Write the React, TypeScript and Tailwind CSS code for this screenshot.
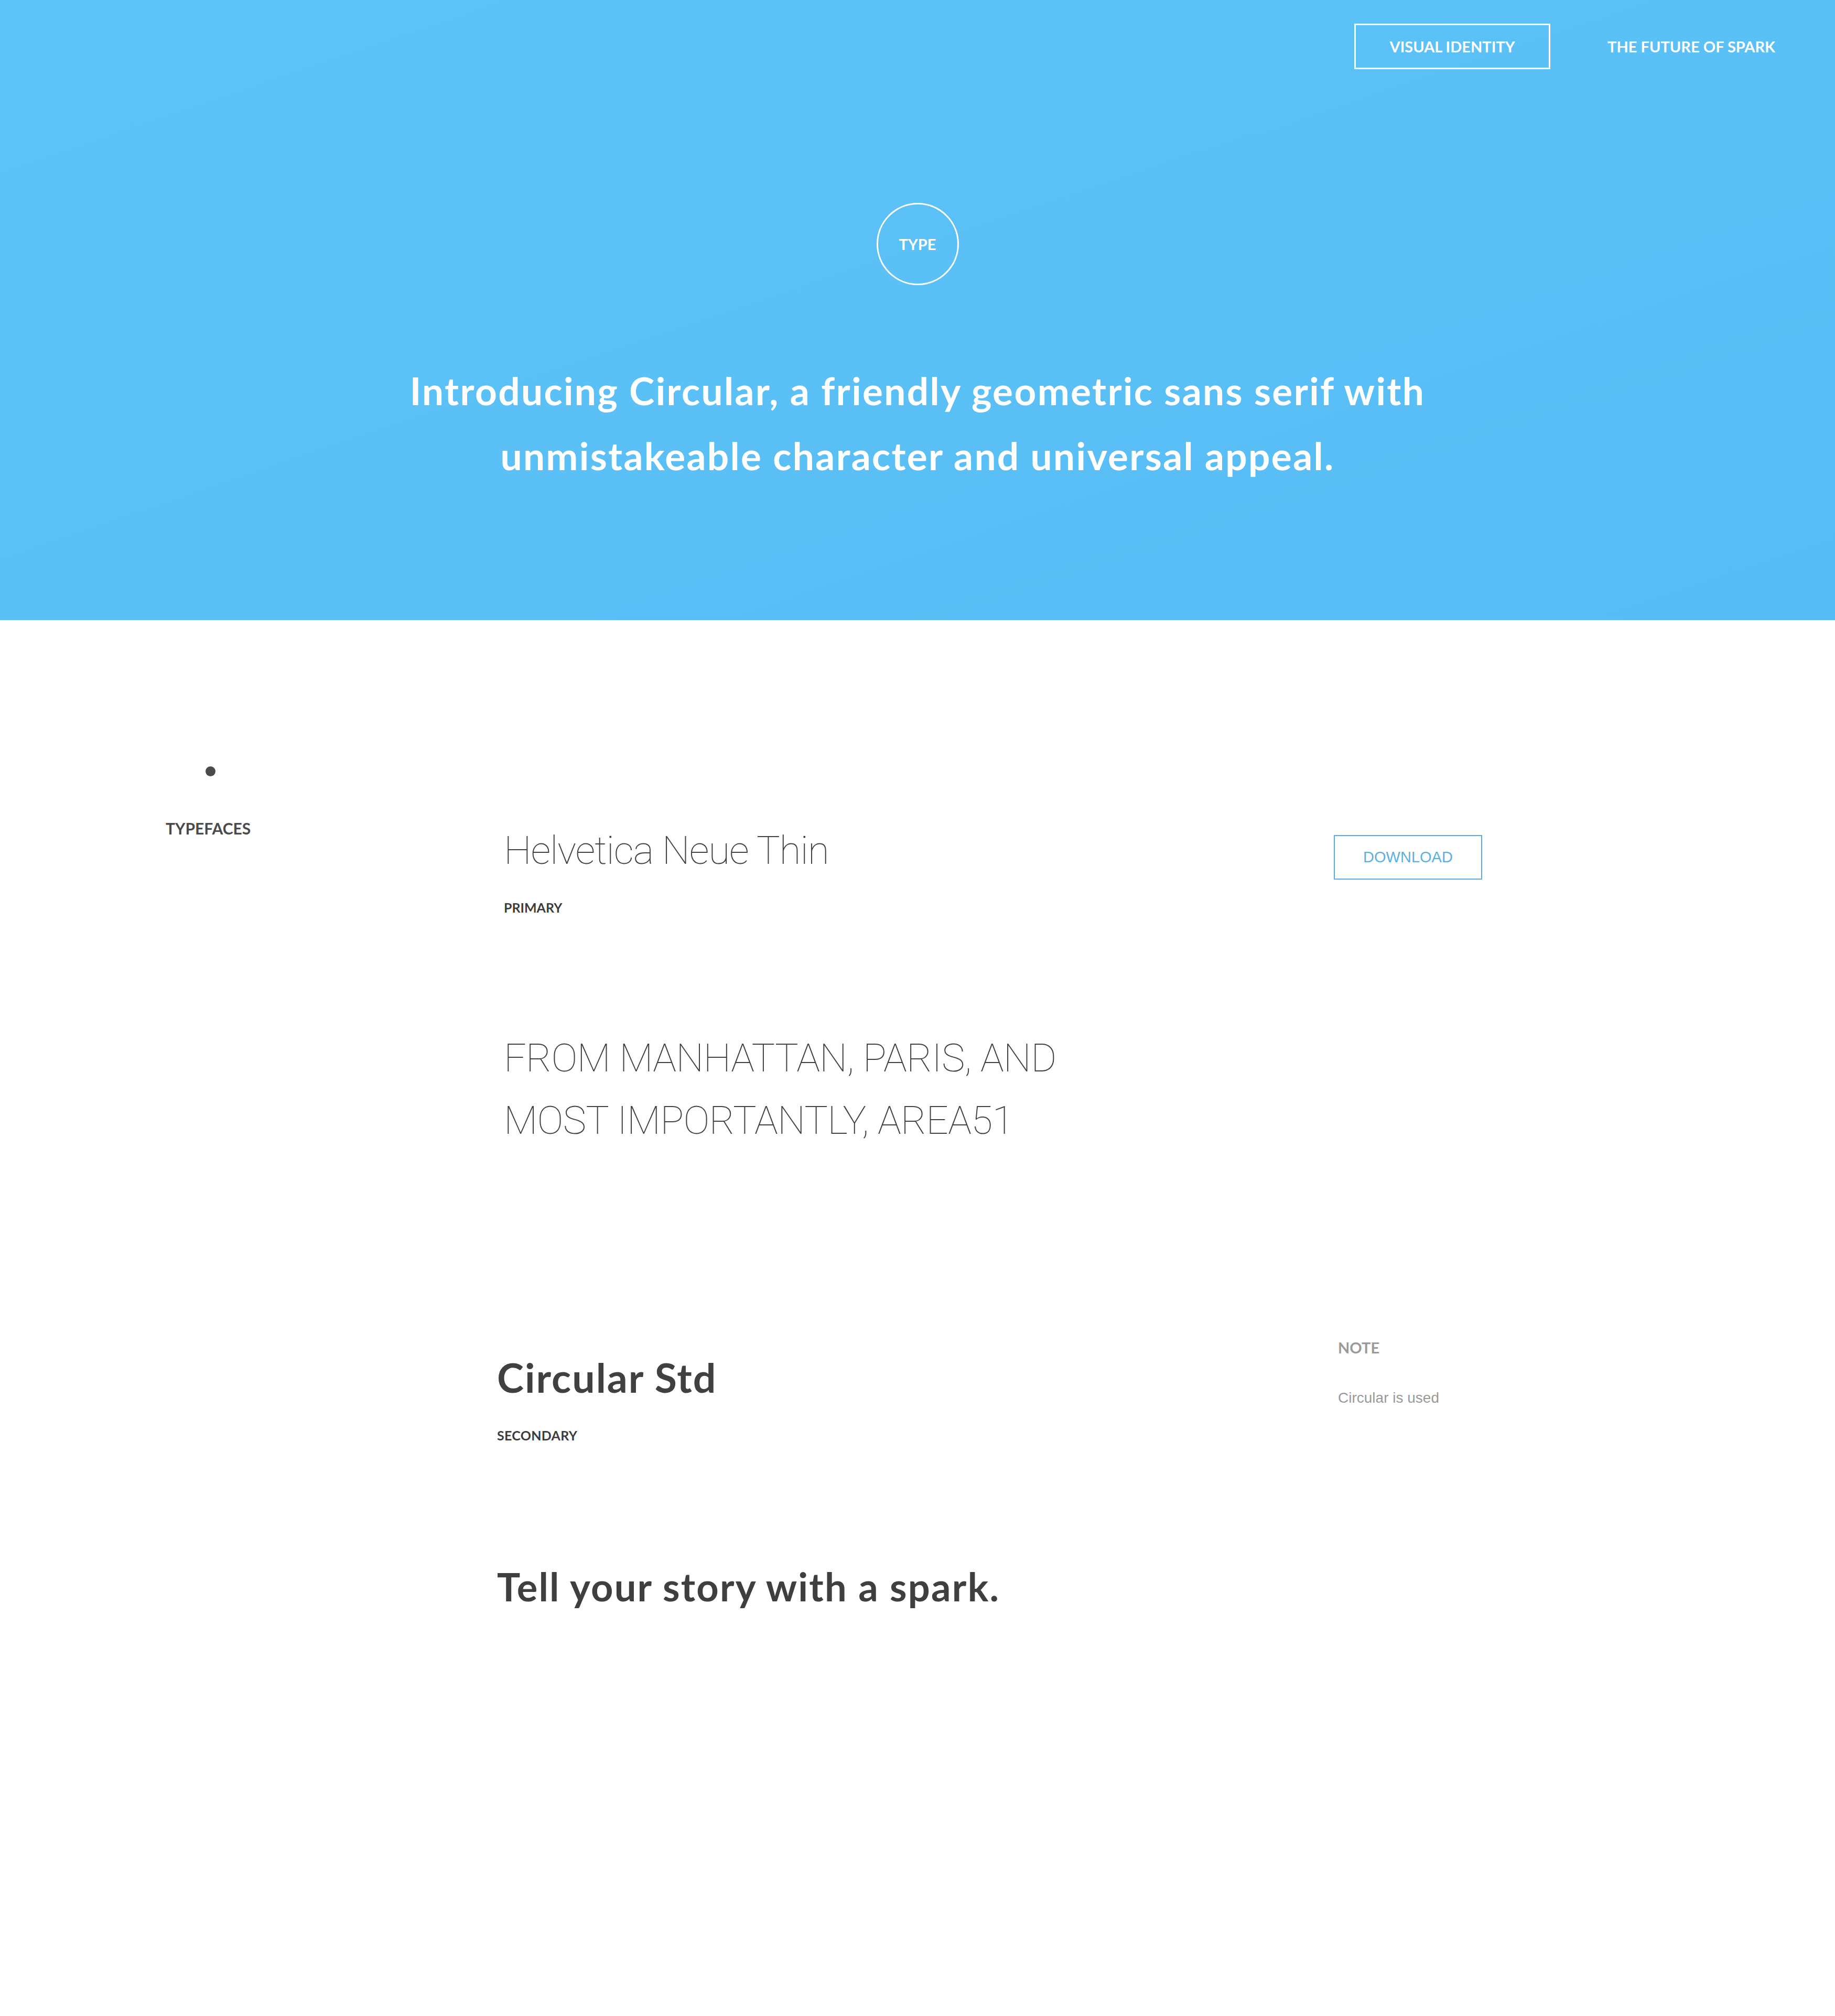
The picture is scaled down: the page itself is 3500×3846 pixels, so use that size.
import { useState } from "react";

const circular = "font-['Lato','Noto_Sans',sans-serif]";
const helv = "font-['Roboto','Liberation_Sans',sans-serif]";
const arial = "font-['Liberation_Sans','Arimo',sans-serif]";

const App = () => {
  const [active] = useState("VISUAL IDENTITY");

  return (
    <div className="min-h-[3846px] w-full bg-white text-[#414141]">
      {/* Hero */}
      <header className="flex h-[1183px] flex-col items-center bg-gradient-to-br from-[#5dc4f8] to-[#57bcf4] text-white">
        <nav className={`flex w-full items-center justify-end gap-[109px] pr-[114px] pt-[45px] ${circular}`}>
          {["VISUAL IDENTITY", "THE FUTURE OF SPARK"].map((item) => (
            <a
              key={item}
              className={`flex h-[87px] items-center justify-center text-[29px] font-bold leading-none ${
                active === item ? "w-[374px] border-[3px] border-white" : ""
              }`}
            >
              {item}
            </a>
          ))}
        </nav>

        <div className={`mt-[255px] flex h-[157px] w-[157px] items-center justify-center rounded-full border-[3px] border-white text-[29px] font-bold leading-none ${circular}`}>
          TYPE
        </div>

        <h1 className={`mt-[139px] max-w-[2200px] text-center text-[73px] font-bold leading-[124px] tracking-[2.3px] ${circular}`}>
          Introducing Circular, a friendly geometric sans serif with
          <br />
          unmistakeable character and universal appeal.
        </h1>
      </header>

      {/* Typefaces */}
      <section className="flex">
        <aside className={`w-[961px] flex-none pl-[316px] ${circular}`}>
          <div className="ml-[76px] mt-[279px] h-[19px] w-[19px] rounded-full bg-[#4a4a4a]" />
          <h2 className="mt-[84px] text-[30px] font-bold leading-none text-[#4a4a4a]">TYPEFACES</h2>
        </aside>

        <div className="flex flex-col">
          {/* Primary */}
          <div className="mt-[402px] flex">
            <div className="w-[1583px] flex-none">
              <h3 className={`text-[75px] font-thin leading-none tracking-[-1.2px] text-[#404040] ${helv}`}>
                Helvetica Neue Thin
              </h3>
              <p className={`mt-[59px] text-[25px] font-bold leading-none text-[#3c3c3c] ${circular}`}>PRIMARY</p>
            </div>
            <button
              className={`mt-[8px] flex h-[85px] w-[283px] items-center justify-center border-2 border-[#5aafe0] text-[29px] leading-none text-[#5ab0e2] ${arial}`}
            >
              DOWNLOAD
            </button>
          </div>

          <p className={`mt-[215px] text-[75px] font-thin leading-[119px] tracking-[-0.8px] text-[#404040] ${helv}`}>
            FROM MANHATTAN, PARIS, AND
            <br />
            MOST IMPORTANTLY, AREA51
          </p>

          {/* Secondary */}
          <div className="mt-[359px] flex">
            <div className={`-ml-[13px] w-[1596px] flex-none pt-[33px] ${circular}`}>
              <h3 className="text-[77px] font-bold leading-none tracking-[2px] text-[#404042]">Circular Std</h3>
              <p className="mt-[60px] text-[25px] font-bold leading-none tracking-[0.3px] text-[#3c3c3c]">SECONDARY</p>
            </div>
            <div className="pl-[8px]">
              <h4 className={`text-[29px] font-bold leading-none text-[#9a9a9a] ${circular}`}>NOTE</h4>
              <p className={`mt-[68px] text-[28px] leading-none text-[#999999] ${arial}`}>Circular is used</p>
            </div>
          </div>

          <p className={`-ml-[13px] mt-[239px] text-[74px] font-bold leading-none tracking-[2.2px] text-[#3f3f41] ${circular}`}>
            Tell your story with a spark.
          </p>
        </div>
      </section>
    </div>
  );
};

export default App;
